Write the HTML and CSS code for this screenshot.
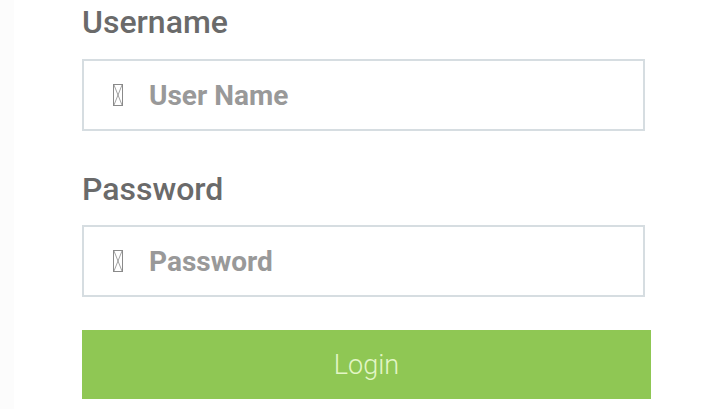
FILE: index.html
```html
<!DOCTYPE html>
<html>
<head>
<meta charset="utf-8">
<link rel="stylesheet" href="styles.css">
</head>
<body>
<div class="page">
  <form class="form">
    <label class="label">Username</label>
    <div class="field">
      <svg class="tofu" width="10" height="22" viewBox="0 0 10 22"><rect x="0.5" y="0.5" width="9" height="21" fill="none" stroke="#8a8a8a" stroke-width="1"/><path d="M1 1 L9 21 M9 1 L1 21" stroke="#8a8a8a" stroke-width="0.8" fill="none"/></svg>
      <span class="placeholder">User Name</span>
    </div>
    <label class="label second">Password</label>
    <div class="field">
      <svg class="tofu" width="10" height="22" viewBox="0 0 10 22"><rect x="0.5" y="0.5" width="9" height="21" fill="none" stroke="#8a8a8a" stroke-width="1"/><path d="M1 1 L9 21 M9 1 L1 21" stroke="#8a8a8a" stroke-width="0.8" fill="none"/></svg>
      <span class="placeholder">Password</span>
    </div>
    <div class="button">Login</div>
  </form>
</div>
</body>
</html>
```

FILE: styles.css
```css
html, body {
  margin: 0;
  padding: 0;
  background: #ffffff;
}
body {
  font-family: Roboto, "Liberation Sans", sans-serif;
  width: 727px;
  height: 409px;
  overflow: hidden;
}
.page {
  height: 409px;
  border-left: 14px solid #fcfcfc;
  box-sizing: border-box;
  padding: 3px 0 0 68px;
}
.form {
  display: flex;
  flex-direction: column;
  width: 569px;
  margin: 0;
}
.label {
  font-size: 32px;
  font-weight: 500;
  line-height: 38px;
  color: #6a6a6a;
  margin-left: 0;
}
.label.second {
  margin-top: 39px;
}
.field {
  margin-top: 18px;
  width: 563px;
  height: 72px;
  box-sizing: border-box;
  border: 2px solid #d6dde1;
  display: flex;
  align-items: center;
  padding-left: 29px;
}
.label.second + .field {
  margin-top: 17px;
}
.tofu {
  flex: none;
  margin-right: 26px;
}
.placeholder {
  font-size: 28px;
  font-weight: 700;
  color: #999999;
}
.button {
  margin-top: 33px;
  height: 69px;
  background: #8fc754;
  color: #e3f6c6;
  font-size: 27px;
  font-weight: 300;
  display: flex;
  align-items: center;
  justify-content: center;
}
```
